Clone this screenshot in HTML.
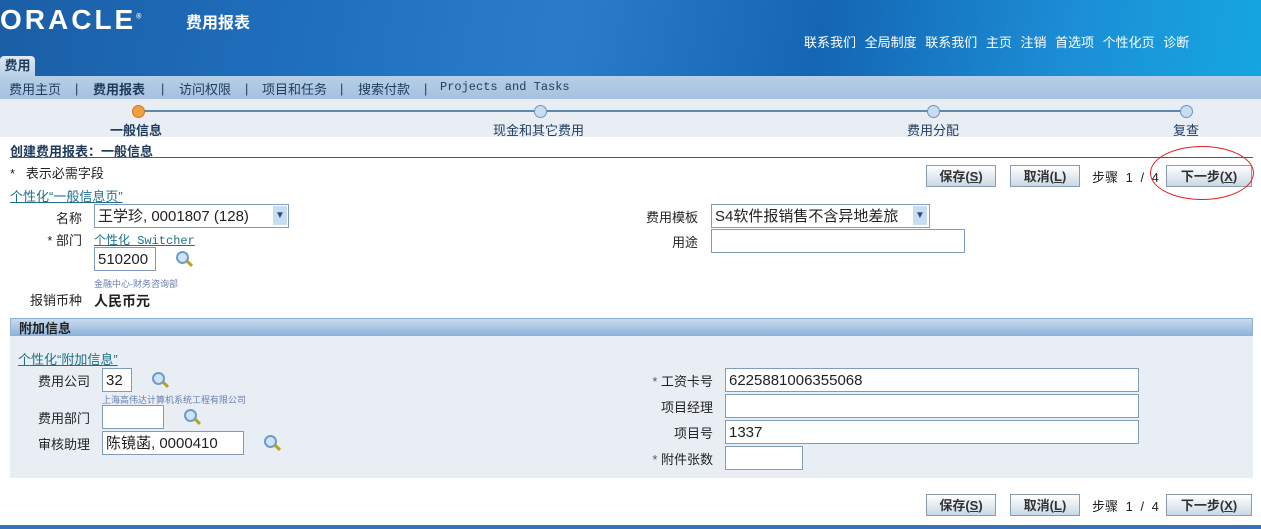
<!DOCTYPE html>
<html><head><meta charset="utf-8"><style>
body{margin:0;width:1261px;height:529px;overflow:hidden;position:relative;background:#fff;font-family:"Liberation Sans","Noto Sans CJK SC",sans-serif;font-size:13px;color:#222}
.a{position:absolute;white-space:nowrap}
.hdr{left:0;top:0;width:1261px;height:76px;background:linear-gradient(100deg,#1a5fa6 0%,#1f6fbf 25%,#2a7cc8 45%,#1466b4 65%,#1c8fd6 85%,#14a6e0 100%)}
.lnk{color:#fff;font-size:13px}
.nav{left:0;top:76px;width:1261px;height:23px;background:linear-gradient(#b7cfe7,#a4c1df)}
.n{position:absolute;top:79px;color:#1f3b5c;white-space:nowrap}
.train{left:0;top:99px;width:1261px;height:38px;background:#e9eef5}
.inp{position:absolute;border:1px solid #7f9db9;background:#fff;box-sizing:border-box;font-size:15px;padding:1px 3px 0;line-height:22px;color:#222;white-space:nowrap;overflow:hidden}
.btn{position:absolute;height:22px;border:1px solid #8a9bb0;background:linear-gradient(#fff,#dfe8f0 60%,#c8d8e4);font-weight:bold;font-size:13px;color:#333;text-align:center;line-height:21px;box-sizing:border-box}
.ul{color:#20708a;text-decoration:underline}
.mag{position:absolute;width:9px;height:9px;border:2px solid #6a9ccc;border-radius:50%;background:#cfe3f5}
.mag:after{content:"";position:absolute;left:8px;top:9px;width:7px;height:3px;background:#b8a020;transform:rotate(45deg)}
.lbl{position:absolute;text-align:right;font-size:13px;color:#222;white-space:nowrap}
.dot{position:absolute;width:11px;height:11px;border-radius:50%;border:1px solid #6d95bd;background:#c9dcf0;top:105px}
.st{position:absolute;white-space:nowrap;font-size:13px;word-spacing:4px}
</style></head><body>
<div class="a hdr"></div>
<div class="a" style="left:0;top:4px;color:#fff;font-size:28px;font-weight:bold;letter-spacing:3px">ORACLE<sup style="font-size:7px">®</sup></div>
<div class="a" style="left:186px;top:9px;color:#fff;font-size:16px;font-weight:bold">费用报表</div>
<div class="a lnk" style="left:804px;top:32px;word-spacing:5px">联系我们 全局制度 联系我们 主页 注销 首选项 个性化页 诊断</div>
<div class="a" style="left:0;top:56px;width:35px;height:20px;background:linear-gradient(#dfe9f3,#b9d0e6);border-radius:4px 4px 0 0;font-weight:bold;color:#1f3b5c;line-height:20px;text-align:center">费用</div>
<div class="a nav"></div>
<div class="n" style="left:9px">费用主页</div>
<div class="n" style="left:75px;top:81px">|</div>
<div class="n" style="left:93px;font-weight:bold">费用报表</div>
<div class="n" style="left:161px;top:81px">|</div>
<div class="n" style="left:179px">访问权限</div>
<div class="n" style="left:245px;top:81px">|</div>
<div class="n" style="left:262px">项目和任务</div>
<div class="n" style="left:340px;top:81px">|</div>
<div class="n" style="left:358px">搜索付款</div>
<div class="n" style="left:424px;top:81px">|</div>
<div class="n" style="left:440px;font-family:'Liberation Mono',monospace;font-size:12px;top:80px">Projects and Tasks</div>
<div class="a train"></div>
<div class="a" style="left:140px;top:110px;width:1048px;height:2px;background:#5d88b3"></div>
<div class="dot" style="left:132px;background:#f0a040;border-color:#c97a20"></div>
<div class="dot" style="left:534px"></div>
<div class="dot" style="left:927px"></div>
<div class="dot" style="left:1180px"></div>
<div class="a" style="left:110px;top:120px;font-weight:bold;color:#1f3b5c">一般信息</div>
<div class="a" style="left:493px;top:120px;color:#1f3b5c">现金和其它费用</div>
<div class="a" style="left:907px;top:120px;color:#1f3b5c">费用分配</div>
<div class="a" style="left:1173px;top:120px;color:#1f3b5c">复查</div>
<div class="a" style="left:10px;top:141px;font-weight:bold;color:#1f3b5c">创建费用报表：一般信息</div>
<div class="a" style="left:10px;top:157px;width:1243px;height:1px;background:#3b5e8c"></div>
<div class="a" style="left:10px;top:163px">*&nbsp;&nbsp;&nbsp;表示必需字段</div>
<div class="btn" style="left:926px;top:165px;width:70px">保存(<u>S</u>)</div>
<div class="btn" style="left:1010px;top:165px;width:70px">取消(<u>L</u>)</div>
<div class="st" style="left:1092px;top:167px">步骤 1 / 4</div>
<div class="btn" style="left:1166px;top:165px;width:86px">下一步(<u>X</u>)</div>
<div class="a" style="left:1150px;top:146px;width:102px;height:52px;border:1.5px solid #e02020;border-radius:50%"></div>
<div class="a ul" style="left:10px;top:186px">个性化“一般信息页”</div>
<div class="lbl" style="left:40px;top:208px;width:42px">名称</div>
<div class="inp" style="left:94px;top:204px;width:195px;height:24px">王学珍, 0001807 (128)</div>
<div class="a" style="left:273px;top:206px;width:14px;height:19px;background:#c8dcf2;color:#2a4e86;font-size:10px;text-align:center;line-height:19px">▼</div>
<div class="lbl" style="left:30px;top:230px;width:52px">* 部门</div>
<div class="a ul" style="left:94px;top:231px;font-size:12px;font-family:'Liberation Mono','Noto Sans CJK SC',monospace">个性化 Switcher</div>
<div class="inp" style="left:94px;top:247px;width:62px;height:24px">510200</div>
<div class="mag" style="left:176px;top:251px"></div>
<div class="a" style="left:94px;top:277px;font-size:9px;color:#6680b0">金融中心-财务咨询部</div>
<div class="lbl" style="left:20px;top:290px;width:62px">报销币种</div>
<div class="a" style="left:94px;top:291px;font-weight:bold;font-size:14px">人民币元</div>
<div class="lbl" style="left:640px;top:207px;width:58px">费用模板</div>
<div class="inp" style="left:711px;top:204px;width:219px;height:24px">S4软件报销售不含异地差旅</div>
<div class="a" style="left:913px;top:206px;width:14px;height:19px;background:#c8dcf2;color:#2a4e86;font-size:10px;text-align:center;line-height:19px">▼</div>
<div class="lbl" style="left:640px;top:232px;width:58px">用途</div>
<div class="inp" style="left:711px;top:229px;width:254px;height:24px"></div>
<div class="a" style="left:10px;top:318px;width:1243px;height:18px;background:linear-gradient(#c9dbee,#8fb3da);border:1px solid #8fb0d4;box-sizing:border-box"></div>
<div class="a" style="left:19px;top:318px;font-weight:bold">附加信息</div>
<div class="a" style="left:10px;top:336px;width:1243px;height:142px;background:#e9eef5"></div>
<div class="a ul" style="left:18px;top:349px">个性化“附加信息”</div>
<div class="lbl" style="left:30px;top:371px;width:60px">费用公司</div>
<div class="inp" style="left:102px;top:368px;width:30px;height:24px">32</div>
<div class="mag" style="left:152px;top:372px"></div>
<div class="a" style="left:102px;top:393px;font-size:9px;color:#6680b0">上海高伟达计算机系统工程有限公司</div>
<div class="lbl" style="left:30px;top:408px;width:60px">费用部门</div>
<div class="inp" style="left:102px;top:405px;width:62px;height:24px"></div>
<div class="mag" style="left:184px;top:409px"></div>
<div class="lbl" style="left:30px;top:434px;width:60px">审核助理</div>
<div class="inp" style="left:102px;top:431px;width:142px;height:24px">陈镜菡, 0000410</div>
<div class="mag" style="left:264px;top:435px"></div>
<div class="lbl" style="left:640px;top:371px;width:73px"><span style="color:#3b5e8c">*</span> 工资卡号</div>
<div class="inp" style="left:725px;top:368px;width:414px;height:24px">6225881006355068</div>
<div class="lbl" style="left:640px;top:397px;width:73px">项目经理</div>
<div class="inp" style="left:725px;top:394px;width:414px;height:24px"></div>
<div class="lbl" style="left:640px;top:423px;width:73px">项目号</div>
<div class="inp" style="left:725px;top:420px;width:414px;height:24px">1337</div>
<div class="lbl" style="left:640px;top:449px;width:73px"><span style="color:#3b5e8c">*</span> 附件张数</div>
<div class="inp" style="left:725px;top:446px;width:78px;height:24px"></div>
<div class="btn" style="left:926px;top:494px;width:70px">保存(<u>S</u>)</div>
<div class="btn" style="left:1010px;top:494px;width:70px">取消(<u>L</u>)</div>
<div class="st" style="left:1092px;top:496px">步骤 1 / 4</div>
<div class="btn" style="left:1166px;top:494px;width:86px">下一步(<u>X</u>)</div>
<div class="a" style="left:0;top:525px;width:1261px;height:4px;background:#3a72b8"></div>
</body></html>
